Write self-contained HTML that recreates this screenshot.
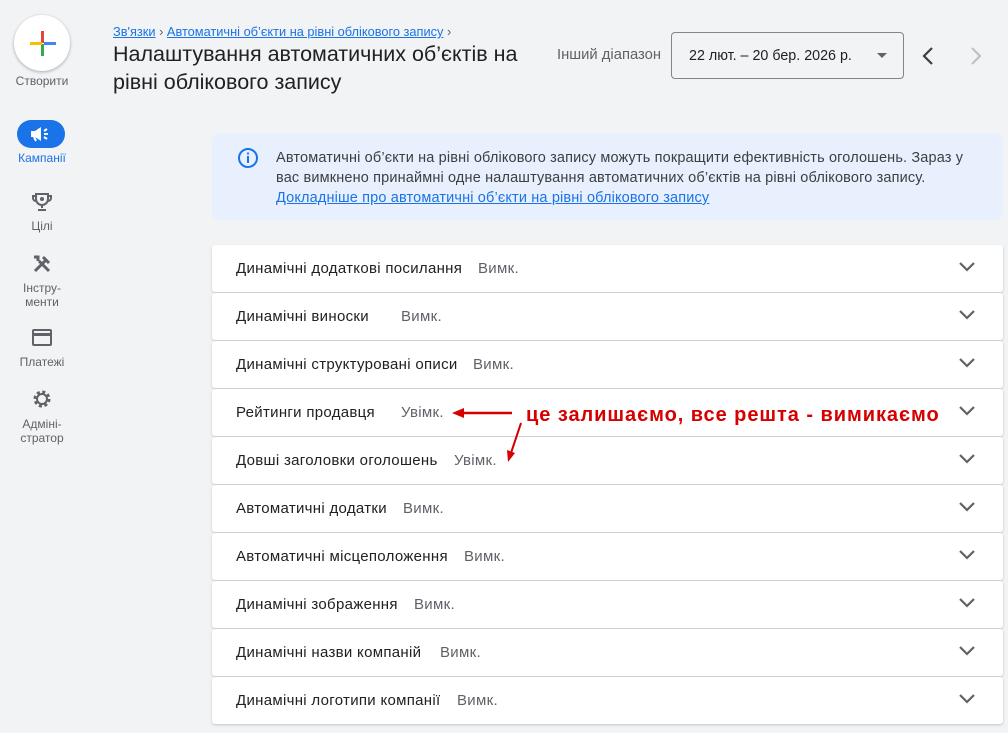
<!DOCTYPE html>
<html><head><meta charset="utf-8"><style>
body{margin:0;width:1008px;height:733px;background:#f1f3f4;font-family:"Liberation Sans",Arial,sans-serif;position:relative;overflow:hidden;color:#3c4043}
.abs{position:absolute}
.nav{position:absolute;left:0;width:84px;text-align:center;font-size:12px;color:#5f6368}
.row{position:absolute;left:212px;width:791px;height:47px;background:#fff;border-radius:3px;box-shadow:0 1px 2px rgba(60,64,67,.25)}
.row .t{position:absolute;left:24px;top:15px;font-size:15px;letter-spacing:0.3px;color:#202124}
.row .s{position:absolute;top:15px;font-size:15px;letter-spacing:0.3px;color:#5f6368}
.row svg{position:absolute;left:746px;top:16px}
</style></head><body>
<div class="abs" style="left:14px;top:15px;width:56px;height:56px;border-radius:50%;background:#fff;box-shadow:0 1px 3px rgba(0,0,0,.3)">
<svg width="56" height="56"><rect x="27" y="16" width="3" height="12" fill="#ea4335"/><rect x="30" y="27" width="12" height="3" fill="#4285f4"/><rect x="27" y="29" width="3" height="12" fill="#34a853"/><rect x="16" y="27" width="12" height="3" fill="#fbbc04"/></svg></div>
<div class="nav" style="top:74px">Створити</div>
<div class="abs" style="left:17px;top:120px;width:48px;height:28px;border-radius:14px;background:#1a73e8">
<svg width="48" height="28"><path d="M14 11h4l6-4v14l-6-4h-4z" fill="#fff"/><path d="M17 17l2 4" stroke="#fff" stroke-width="2"/><path d="M27 11l3-2M27 14h4M27 17l3 2" stroke="#fff" stroke-width="2"/></svg></div>
<div class="nav" style="top:151px;color:#1a73e8">Кампанії</div>
<svg class="abs" style="left:31px;top:191px" width="22" height="22"><path d="M5 3h12v5a6 6 0 0 1-12 0z M5 5H2v2a3 3 0 0 0 3 3M17 5h3v2a3 3 0 0 1-3 3M11 14v3M7 19h8" fill="none" stroke="#5f6368" stroke-width="2"/><circle cx="11" cy="8" r="2" fill="#5f6368"/></svg>
<div class="nav" style="top:219px">Цілі</div>
<svg class="abs" style="left:31px;top:253px" width="22" height="22"><path d="M4 18L14 8M18 18L8 8M12 4l6 6M3 4l4 0 0 4" stroke="#5f6368" stroke-width="3" fill="none"/></svg>
<div class="nav" style="top:281px;line-height:14px">Інстру-<br>менти</div>
<svg class="abs" style="left:31px;top:328px" width="22" height="20"><rect x="2" y="2" width="18" height="15" rx="1" fill="none" stroke="#5f6368" stroke-width="2"/><rect x="2" y="5" width="18" height="3" fill="#5f6368"/></svg>
<div class="nav" style="top:355px">Платежі</div>
<svg class="abs" style="left:31px;top:388px" width="22" height="22"><circle cx="11" cy="11" r="7" fill="none" stroke="#5f6368" stroke-width="3" stroke-dasharray="3 2.5"/><circle cx="11" cy="11" r="5" fill="none" stroke="#5f6368" stroke-width="2"/></svg>
<div class="nav" style="top:417px;line-height:14px">Адміні-<br>стратор</div>

<div class="abs" style="left:113px;top:24px;font-size:12.8px;color:#1a73e8"><u>Зв'язки</u> <span style="color:#5f6368">›</span> <u>Автоматичні об’єкти на рівні облікового запису</u> <span style="color:#5f6368">›</span></div>
<div class="abs" style="left:113px;top:40px;font-size:21.5px;line-height:28px;color:#202124;width:440px">Налаштування автоматичних об’єктів на рівні облікового запису</div>
<div class="abs" style="left:557px;top:47px;font-size:14.8px;color:#5f6368">Інший діапазон</div>
<div class="abs" style="left:671px;top:32px;width:233px;height:47px;border:1px solid #80868b;border-radius:4px;box-sizing:border-box"><span class="abs" style="left:17px;top:15px;font-size:14.3px;color:#202124">22 лют. – 20 бер. 2026 р.</span><svg class="abs" style="left:205px;top:20px" width="12" height="6"><path d="M0 0h10L5 5z" fill="#5f6368"/></svg></div>
<svg class="abs" style="left:920px;top:46px" width="16" height="20"><path d="M12 2L4 10l8 8" stroke="#3c4043" stroke-width="2.2" fill="none"/></svg>
<svg class="abs" style="left:968px;top:46px" width="16" height="20"><path d="M4 2l8 8-8 8" stroke="#bdc1c6" stroke-width="2.2" fill="none"/></svg>

<div class="abs" style="left:212px;top:133px;width:791px;height:87px;background:#e8f0fe;border-radius:8px">
<svg class="abs" style="left:25px;top:14px" width="22" height="22"><circle cx="11" cy="11" r="9" fill="none" stroke="#1a73e8" stroke-width="2"/><rect x="10" y="9" width="2" height="7" fill="#1a73e8"/><rect x="10" y="5.5" width="2" height="2" fill="#1a73e8"/></svg>
<div class="abs" style="left:64px;top:15px;font-size:14.5px;letter-spacing:0.15px;line-height:20px;color:#3c4043;width:700px">Автоматичні об’єкти на рівні облікового запису можуть покращити ефективність оголошень. Зараз у вас вимкнено принаймні одне налаштування автоматичних об’єктів на рівні облікового запису.<br><u style="color:#1a73e8">Докладніше про автоматичні об’єкти на рівні облікового запису</u></div></div>

<div class="row" style="top:245px"><span class="t">Динамічні додаткові посилання</span><span class="s" style="left:266px">Вимк.</span><svg width="18" height="12"><path d="M2 2l7 7 7-7" stroke="#5f6368" stroke-width="2.2" fill="none"/></svg></div>
<div class="row" style="top:293px"><span class="t">Динамічні виноски</span><span class="s" style="left:189px">Вимк.</span><svg width="18" height="12"><path d="M2 2l7 7 7-7" stroke="#5f6368" stroke-width="2.2" fill="none"/></svg></div>
<div class="row" style="top:341px"><span class="t">Динамічні структуровані описи</span><span class="s" style="left:261px">Вимк.</span><svg width="18" height="12"><path d="M2 2l7 7 7-7" stroke="#5f6368" stroke-width="2.2" fill="none"/></svg></div>
<div class="row" style="top:389px"><span class="t">Рейтинги продавця</span><span class="s" style="left:189px">Увімк.</span><svg width="18" height="12"><path d="M2 2l7 7 7-7" stroke="#5f6368" stroke-width="2.2" fill="none"/></svg></div>
<div class="row" style="top:437px"><span class="t">Довші заголовки оголошень</span><span class="s" style="left:242px">Увімк.</span><svg width="18" height="12"><path d="M2 2l7 7 7-7" stroke="#5f6368" stroke-width="2.2" fill="none"/></svg></div>
<div class="row" style="top:485px"><span class="t">Автоматичні додатки</span><span class="s" style="left:191px">Вимк.</span><svg width="18" height="12"><path d="M2 2l7 7 7-7" stroke="#5f6368" stroke-width="2.2" fill="none"/></svg></div>
<div class="row" style="top:533px"><span class="t">Автоматичні місцеположення</span><span class="s" style="left:252px">Вимк.</span><svg width="18" height="12"><path d="M2 2l7 7 7-7" stroke="#5f6368" stroke-width="2.2" fill="none"/></svg></div>
<div class="row" style="top:581px"><span class="t">Динамічні зображення</span><span class="s" style="left:202px">Вимк.</span><svg width="18" height="12"><path d="M2 2l7 7 7-7" stroke="#5f6368" stroke-width="2.2" fill="none"/></svg></div>
<div class="row" style="top:629px"><span class="t">Динамічні назви компаній</span><span class="s" style="left:228px">Вимк.</span><svg width="18" height="12"><path d="M2 2l7 7 7-7" stroke="#5f6368" stroke-width="2.2" fill="none"/></svg></div>
<div class="row" style="top:677px"><span class="t">Динамічні логотипи компанії</span><span class="s" style="left:245px">Вимк.</span><svg width="18" height="12"><path d="M2 2l7 7 7-7" stroke="#5f6368" stroke-width="2.2" fill="none"/></svg></div>

<svg class="abs" style="left:440px;top:395px" width="100" height="75"><path d="M72 18H20" stroke="#d50000" stroke-width="2.5"/><path d="M12 18l12-5v10z" fill="#d50000"/><path d="M81 28L71 58" stroke="#d50000" stroke-width="2"/><path d="M68 67l-1-12 8 3z" fill="#d50000"/></svg>
<div class="abs" style="left:526px;top:404px;font-size:20px;font-weight:bold;color:#d50000;letter-spacing:0.95px">це залишаємо, все решта - вимикаємо</div>
</body></html>
